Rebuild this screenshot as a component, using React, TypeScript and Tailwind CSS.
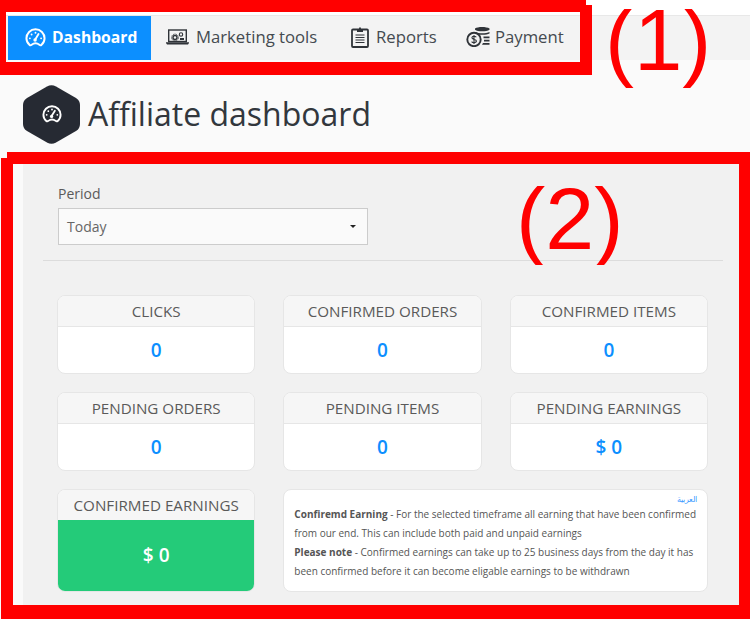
import React from "react";

function GaugeIcon({ className, color }: { className?: string; color: string }) {
  return (
    <svg viewBox="0 0 24 22" className={className} fill="none">
      <path d="M5 19.500C2.800 17.700 1.500 15 1.500 12 1.500 6.200 6.200 1.500 12 1.500S22.500 6.200 22.500 12c0 3-1.300 5.700-3.500 7.500-.8.600-1.800.5-2.500-.1-2.600-2-6.400-2-9 0-.7.600-1.700.7-2.500.1Z" stroke={color} strokeWidth="2.300" />
      <path d="M11.500 13.500 15.500 7" stroke={color} strokeWidth="2.200" strokeLinecap="round" />
      <circle cx="11.500" cy="14" r="2" fill={color} />
      <circle cx="5.500" cy="12" r="1.100" fill={color} />
      <circle cx="7.500" cy="7.500" r="1.100" fill={color} />
      <circle cx="12" cy="5.500" r="1.100" fill={color} />
      <circle cx="18.500" cy="12" r="1.100" fill={color} />
    </svg>
  );
}

function LaptopIcon() {
  const c = "#2f3338";
  return (
    <svg viewBox="0 0 23 16" className="w-[23px] h-[16px]" fill="none">
      <rect x="2.700" y="1" width="17.600" height="11.500" stroke={c} strokeWidth="1.400" />
      <circle cx="9" cy="8.500" r="2" stroke={c} strokeWidth="1.400" />
      <circle cx="9" cy="8.500" r="3.400" stroke={c} strokeWidth="1" strokeDasharray="1.300 1" />
      <circle cx="15" cy="5.500" r="1.700" stroke={c} strokeWidth="1.100" />
      <path d="M14 9h4v2h-4Z" fill={c} />
      <path d="M0 13.300h23v.7l-1 1.400H1L0 14Z" fill={c} />
    </svg>
  );
}

function ClipboardIcon() {
  const c = "#2f3338";
  return (
    <svg viewBox="0 0 18 22" className="w-[18px] h-[22px]" fill="none">
      <rect x="1" y="3.500" width="16" height="17.500" rx="1" stroke={c} strokeWidth="1.800" />
      <path d="M6 3h2c0-2.400 2-2.400 2 0h2v3H6Z" fill={c} />
      <path d="M4.500 9h9M4.500 11.500h9M4.500 14h9M4.500 16.500h9" stroke={c} strokeWidth="1.100" />
    </svg>
  );
}

function CoinsIcon() {
  const c = "#2f3338";
  return (
    <svg viewBox="0 0 24 20" className="w-[24px] h-[20px]" fill="none">
      <path d="M9 1.500C10.500.5 13 0 16 0s6 .5 7.500 1.500v1.300C22 3.800 19 4.300 16 4.300s-5.500-.5-7-1.500Z" fill={c} />
      <path d="M10 5.300c1.500.6 3.500 1 6 1s6-.4 7.500-1.300v1.500c-1.500.9-4 1.300-7 1.300H13l-3-1Z" fill={c} />
      <path d="M17.500 9.500h6v1.700h-6ZM18 12.800h5.500v1.700H18ZM17 16h6.500v1.700H16Z" fill={c} />
      <circle cx="8" cy="12.500" r="6.700" stroke={c} strokeWidth="1.900" />
      <path d="M10.300 10.200c-.5-.7-1.300-1-2.300-1-1.200 0-2.100.6-2.100 1.600 0 2.200 4.500 1.100 4.500 3.300 0 1-1 1.600-2.400 1.600-1 0-1.900-.4-2.400-1.100M8 8v9" stroke={c} strokeWidth="1.100" />
    </svg>
  );
}

function Stat({ title, value }: { title: string; value: string }) {
  return (
    <div className="rounded-lg overflow-hidden border border-[#e6e6e6] h-[79px] flex flex-col bg-white">
      <div className="h-[31px] bg-[#f6f6f6] border-b border-[#e6e6e6] text-[15.200px] text-[#5a5a5a] flex items-center justify-center">{title}</div>
      <div className="flex-1 flex items-center justify-center text-[19px] font-semibold text-[#0c8fff]">{value}</div>
    </div>
  );
}

export default function App() {
  return (
    <div className="relative w-[750px] h-[619px] overflow-hidden bg-[#fafafa] font-['Open_Sans',sans-serif]">
      <div className="h-[15px] bg-white" />
      <nav className="h-[45px] bg-[#f3f3f3] border-t border-[#e8e8e8] flex items-stretch pl-[8px] text-[16.700px] text-[#444a50]">
        <div className="w-[143px] bg-[#0c8fff] text-white font-bold text-[15.700px] flex items-center gap-[6px] pl-[17px] pb-[1px]">
          <GaugeIcon className="w-[21px] h-[19px]" color="#ffffff" />
          Dashboard
        </div>
        <div className="flex items-center gap-[7px] pl-[15px] w-[200px] pb-[2px]">
          <LaptopIcon />
          Marketing tools
        </div>
        <div className="flex items-center gap-[7px] w-[115px] pb-[2px]">
          <ClipboardIcon />
          Reports
        </div>
        <div className="flex items-center gap-[5px] pb-[2px]">
          <CoinsIcon />
          Payment
        </div>
      </nav>
      <header className="h-[92px] flex items-center pl-[23px] gap-[8px] pt-[16px]">
        <div className="relative w-[57px] h-[61px] flex items-center justify-center">
          <svg viewBox="0 0 57 61" className="absolute inset-0 w-full h-full">
            <path d="M24 2.500q4.500-2.500 9 0l20 11.500q4 2.500 4 7v19q0 4.500-4 7l-20 11.500q-4.500 2.500-9 0L4 47q-4-2.500-4-7V21q0-4.500 4-7Z" fill="#262a33" />
          </svg>
          <GaugeIcon className="relative w-[20px] h-[18px]" color="#ffffff" />
        </div>
        <h1 className="text-[32px] text-[#32373d]">Affiliate dashboard</h1>
      </header>
      <main className="ml-[23px] h-[460px] bg-[#f1f1f1] pt-[35px]">
        <div className="pl-[35px]">
          <div className="text-[14px] text-[#5a5a5a] leading-[20px] mb-[4px] mt-[-3px]">Period</div>
          <div className="w-[310px] h-[37px] border border-[#cccccc] bg-[#fafafa] flex items-center justify-between pl-[8px] pr-[11px] text-[14px] text-[#666]">
            Today
            <span className="w-0 h-0 border-x-[3px] border-x-transparent border-t-[3px] border-t-[#222]" />
          </div>
        </div>
        <div className="ml-[20px] w-[680px] border-t border-[#dcdcdc] mt-[15px]" />
        <div className="ml-[34px] w-[651px] mt-[34px] grid grid-cols-3 gap-x-[28px] gap-y-[18px]">
          <Stat title="CLICKS" value="0" />
          <Stat title="CONFIRMED ORDERS" value="0" />
          <Stat title="CONFIRMED ITEMS" value="0" />
          <Stat title="PENDING ORDERS" value="0" />
          <Stat title="PENDING ITEMS" value="0" />
          <Stat title="PENDING EARNINGS" value="$ 0" />
          <div className="rounded-lg overflow-hidden border border-[#e6e6e6] h-[103px] flex flex-col bg-white">
            <div className="h-[30px] shrink-0 bg-[#f6f6f6] text-[15.200px] text-[#5a5a5a] flex items-center justify-center">CONFIRMED EARNINGS</div>
            <div className="flex-1 flex items-center justify-center text-[19px] font-semibold text-white bg-[#24cb79]">$ 0</div>
          </div>
          <div className="col-span-2 rounded-lg border border-[#e6e6e6] h-[103px] bg-white pl-[10px] pr-[10px] pt-[4px] text-[10px] leading-[19px] text-[#555]">
            <div className="text-right text-[#3d9bff] text-[8px] leading-[10px] mb-[1px]">العربية</div>
            <p className="w-[405px]"><b>Confiremd Earning</b> - For the selected timeframe all earning that have been confirmed from our end. This can include both paid and unpaid earnings</p>
            <p className="w-[405px]"><b>Please note</b> - Confirmed earnings can take up to 25 business days from the day it has been confirmed before it can become eligable earnings to be withdrawn</p>
          </div>
        </div>
      </main>

      {/* Annotation (1) */}
      <div className="absolute left-0 top-0 w-[586px] h-[12px] bg-[#ff0000]" />
      <div className="absolute left-0 top-0 w-[6px] h-[75px] bg-[#ff0000]" />
      <div className="absolute left-0 top-[62px] w-[592px] h-[13px] bg-[#ff0000]" />
      <div className="absolute left-[580px] top-[5px] w-[12px] h-[70px] bg-[#ff0000]" />
      <div className="absolute left-[600px] top-[9px] w-[120px] h-[79px] overflow-hidden">
        <div className="mt-[-27px] ml-[5px] text-[87px] leading-[116px] text-[#ff0000] font-['Liberation_Sans',sans-serif]">(1)</div>
      </div>

      {/* Annotation (2) */}
      <div className="absolute left-[7px] top-[152px] w-[743px] h-[12px] bg-[#ff0000]" />
      <div className="absolute left-[1px] top-[158px] w-[12px] h-[461px] bg-[#ff0000]" />
      <div className="absolute left-[739px] top-[152px] w-[11px] h-[467px] bg-[#ff0000]" />
      <div className="absolute left-[1px] top-[605px] w-[749px] h-[14px] bg-[#ff0000]" />
      <div className="absolute left-[510px] top-[180px] w-[120px] h-[85px] overflow-hidden">
        <div className="mt-[-19px] ml-[6px] text-[88px] leading-[116px] text-[#ff0000] font-['Liberation_Sans',sans-serif]">(2)</div>
      </div>
    </div>
  );
}
